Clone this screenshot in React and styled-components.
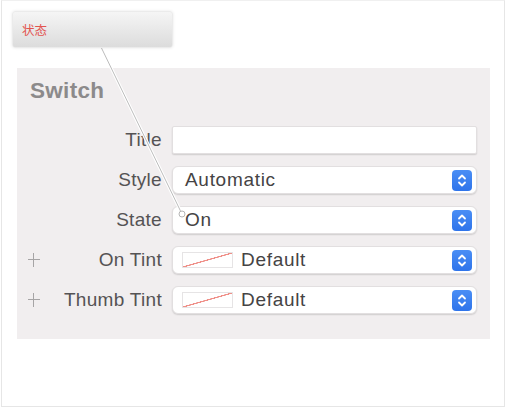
import React from 'react'
import styled, { createGlobalStyle } from 'styled-components'

const Global = createGlobalStyle`
  html, body {
    margin: 0;
    padding: 0;
    background: #ffffff;
  }
  body {
    font-family: "Liberation Sans", Arial, sans-serif;
  }
`

const Frame = styled.div`
  position: relative;
  box-sizing: border-box;
  width: 504px;
  height: 407px;
  margin-left: 1px;
  border: 1px solid #e6e6e6;
  border-top-color: #f0f0f0;
  background: #ffffff;
  padding: 67px 0 0 15px;
`

const Panel = styled.section`
  box-sizing: border-box;
  width: 473px;
  height: 271px;
  background: #f1eeef;
  padding: 9px 13px 0 10px;
`

const Heading = styled.h2`
  margin: 0 0 21px 3px;
  font-size: 22.5px;
  line-height: 28px;
  font-weight: 700;
  color: #8c8a8b;
  letter-spacing: 0.3px;
`

const Rows = styled.div`
  display: flex;
  flex-direction: column;
  gap: 12px;
`

const Row = styled.div`
  display: flex;
  align-items: center;
  height: 28px;
`

const Plus = styled.span`
  position: relative;
  width: 14px;
  height: 14px;
  flex: none;
  &::before, &::after {
    content: '';
    position: absolute;
    background: #a6a4a5;
  }
  &::before {
    left: 1px;
    right: 1px;
    top: 6px;
    height: 1.2px;
  }
  &::after {
    top: 0;
    bottom: 0;
    left: 6px;
    width: 1.2px;
  }
  visibility: ${p => (p.$show ? 'visible' : 'hidden')};
`

const Label = styled.label`
  width: 121px;
  flex: none;
  text-align: right;
  font-size: 19px;
  line-height: 28px;
  color: #555354;
  letter-spacing: 0.3px;
  margin-right: 10px;
  white-space: nowrap;
`

const Field = styled.div`
  box-sizing: border-box;
  flex: 1;
  height: 28px;
  display: flex;
  align-items: center;
  gap: 8px;
  background: #ffffff;
  border-radius: ${p => (p.$plain ? '2px' : '6px')};
  border: 0.5px solid #e2dfe0;
  box-shadow: 0 1px 1.5px rgba(0, 0, 0, 0.14);
  padding: 0 4px 0 ${p => (p.$swatch ? '9px' : '12px')};
`

const Value = styled.span`
  flex: 1;
  font-size: 19px;
  line-height: 28px;
  color: #454344;
  letter-spacing: 0.7px;
`

const Swatch = styled.span`
  box-sizing: border-box;
  width: 51px;
  height: 16px;
  flex: none;
  border: 1px solid #e6e4e5;
  background: linear-gradient(
    to bottom right,
    transparent calc(50% - 0.8px),
    #ef8f88 calc(50% - 0.5px),
    #ef8f88 calc(50% + 0.5px),
    transparent calc(50% + 0.8px)
  );
`

const Stepper = styled.span`
  width: 20px;
  height: 21px;
  flex: none;
  border-radius: 4px;
  background: linear-gradient(#4a8ef5, #2f74ea);
  display: flex;
  align-items: center;
  justify-content: center;
`

const Tag = styled.div`
  position: absolute;
  left: 10px;
  top: 10px;
  box-sizing: border-box;
  width: 161px;
  height: 37px;
  border: 1px solid #ebebeb;
  border-radius: 3px;
  background: linear-gradient(#f5f5f5, #dcdcdc);
  box-shadow: 0 0 3px rgba(0, 0, 0, 0.1);
  padding-left: 9px;
  display: flex;
  align-items: center;
  font-family: "Noto Sans CJK SC", "Liberation Sans", sans-serif;
  font-size: 12.5px;
  color: #e2544f;
`

const Leader = styled.svg`
  position: absolute;
  left: 0;
  top: 0;
  pointer-events: none;
`

const Arrows = () => (
  <svg width="10" height="15" viewBox="0 0 10 15">
    <path d="M2 5.5 L5 2.5 L8 5.5 M2 9.5 L5 12.5 L8 9.5" fill="none" stroke="#ffffff" strokeWidth="1.8" strokeLinecap="round" strokeLinejoin="round" />
  </svg>
)

const rows = [
  { label: 'Title', plain: true },
  { label: 'Style', value: 'Automatic' },
  { label: 'State', value: 'On' },
  { label: 'On Tint', value: 'Default', swatch: true, plus: true },
  { label: 'Thumb Tint', value: 'Default', swatch: true, plus: true },
]

export default function App() {
  return (
    <>
      <Global />
      <Frame>
        <Panel>
          <Heading>Switch</Heading>
          <Rows>
            {rows.map(r => (
              <Row key={r.label}>
                <Plus $show={r.plus} />
                <Label>{r.label}</Label>
                <Field $plain={r.plain} $swatch={r.swatch}>
                  {r.swatch && <Swatch />}
                  <Value>{r.value}</Value>
                  {!r.plain && (
                    <Stepper>
                      <Arrows />
                    </Stepper>
                  )}
                </Field>
              </Row>
            ))}
          </Rows>
        </Panel>
        <Leader width="504" height="407">
          <line x1="99" y1="46" x2="179" y2="211" stroke="#ffffff" strokeWidth="3" />
          <line x1="99" y1="46" x2="179" y2="211" stroke="#bdbdbd" strokeWidth="1" />
          <circle cx="180" cy="213" r="3" fill="#ffffff" stroke="#b5b5b5" strokeWidth="1" />
        </Leader>
        <Tag>状态</Tag>
      </Frame>
    </>
  )
}
